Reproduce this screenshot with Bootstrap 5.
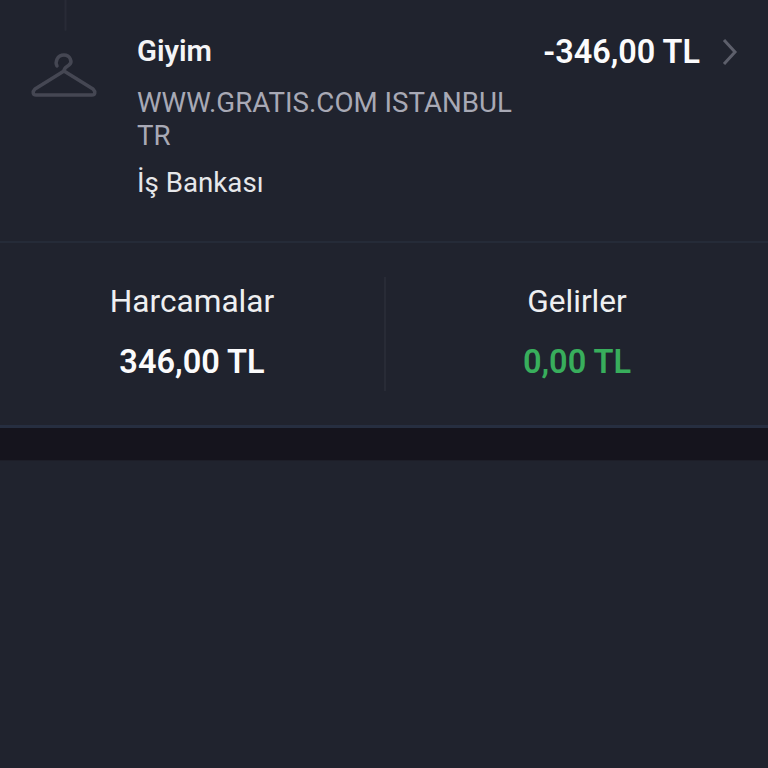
<!DOCTYPE html>
<html lang="tr">
<head>
  <meta charset="UTF-8">
  <title>Harcamalar</title>
  <link href="https://cdn.jsdelivr.net/npm/bootstrap@5.3.3/dist/css/bootstrap.min.css" rel="stylesheet">
  <style>
    html, body { height: 100%; }
    body { background: #20232e; font-family: Roboto, "Liberation Sans", sans-serif; color: #fff; }
    .tx-row { height: 243px; border-bottom: 2px solid #252b38; }
    .tx-icon-col { width: 137px; }
    .tx-icon-col svg { display: block; }
    .tx-body { width: 384px; padding-top: 33px; }
    .tx-title { font-size: 29.2px; font-weight: 600; line-height: 36px; color: #f4f4f6; }
    .tx-desc { font-size: 27.7px; line-height: 33px; color: #a8a9b5; margin-top: 17px; }
    .tx-bank { font-size: 27.7px; line-height: 36px; color: #e6e7ea; margin-top: 13px; }
    .tx-amount { width: 179px; padding-top: 33px; font-size: 32.4px; font-weight: 600; line-height: 38px; text-align: right; color: #fbfbfc; white-space: nowrap; }
    .tx-chevron { padding: 38px 0 0 22px; }
    .sum-row { height: 185px; border-bottom: 3px solid #262e40; }
    .sum-col { text-align: center; padding-top: 39px; }
    .sum-col-left { width: 384px; }
    .sum-col-right { width: 382px; }
    .sum-divider { width: 2px; height: 114px; margin-top: 34px; background: #282b36; flex: none; }
    .sum-label { font-size: 31.6px; line-height: 40px; color: #eeeff1; }
    .sum-value { font-size: 32.5px; font-weight: 600; line-height: 40px; margin-top: 20px; color: #fbfbfc; }
    .sum-value-income { color: #38ae5c; }
    .gap-band { height: 33px; background: #15141d; border-bottom: 1px solid #1d1e28; }
  </style>
</head>
<body>
  <!-- transaction -->
  <div class="tx-row d-flex">
    <div class="tx-icon-col flex-shrink-0">
      <svg width="137" height="110" viewBox="0 0 137 110" fill="none" stroke="#454753" stroke-width="3.500" stroke-linecap="round" stroke-linejoin="round">
        <path d="M65.500 0V30" stroke="#282b36" stroke-width="2"/>
        <path d="M57 66c-2-4 0-11 7-11 6 0 9 7 5 10-2 2-5 2-5 6"/>
        <path d="M64 71L35 89c-3 3-2 6 1 6h56c3 0 4-3 1-6Z"/>
      </svg>
    </div>
    <div class="tx-body flex-shrink-0">
      <div class="tx-title">Giyim</div>
      <div class="tx-desc">WWW.GRATIS.COM ISTANBUL TR</div>
      <div class="tx-bank">İş Bankası</div>
    </div>
    <div class="tx-amount flex-shrink-0">-346,00 TL</div>
    <div class="tx-chevron">
      <svg width="16" height="28" viewBox="0 0 16 28" fill="none" stroke="#5d5f6b" stroke-width="3"><path d="M2 2l11 12L2 26"/></svg>
    </div>
  </div>

  <!-- totals -->
  <div class="sum-row d-flex">
    <div class="sum-col sum-col-left">
      <div class="sum-label">Harcamalar</div>
      <div class="sum-value">346,00 TL</div>
    </div>
    <div class="sum-divider"></div>
    <div class="sum-col sum-col-right">
      <div class="sum-label">Gelirler</div>
      <div class="sum-value sum-value-income">0,00 TL</div>
    </div>
  </div>

  <div class="gap-band"></div>

  <script src="https://cdn.jsdelivr.net/npm/bootstrap@5.3.3/dist/js/bootstrap.bundle.min.js"></script>
</body>
</html>
